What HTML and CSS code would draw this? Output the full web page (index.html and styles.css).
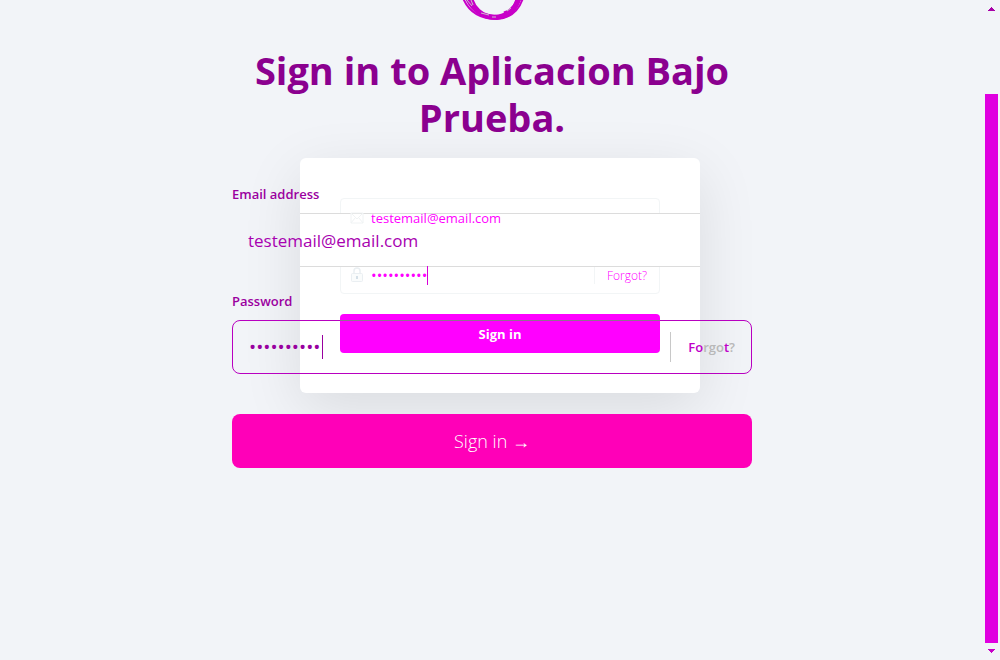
FILE: index.html
```html
<!DOCTYPE html>
<html lang="en">
<head>
<meta charset="utf-8">
<title>Sign in</title>
<link rel="stylesheet" href="styles.css">
</head>
<body>
<div class="page">
  <section class="back">
    <form class="card">
      <div class="band"></div>
      <div class="field small">
        <svg class="icon" viewBox="0 0 14 14"><path d="M1 3h12v10H1zM1 3l6 6 6-6M1 13l4-5M13 13L9 8" fill="none" stroke="#f0f3f4"/></svg>
        <input class="small-email" type="email" value="testemail@email.com" aria-label="Email">
      </div>
      <div class="field small">
        <svg class="icon lock" viewBox="0 0 14 16"><path d="M4 7V4a3 3 0 0 1 6 0v3" fill="none" stroke="#eaeff2" stroke-width="1.5"/><rect x="1.5" y="6.5" width="11" height="8" rx="1" fill="#fafcfc" stroke="#eaeff2"/><path d="M6 9h2v3H6z" fill="#d5e0e8"/></svg>
        <input class="small-pass" type="password" value="abcdefghij" aria-label="Account password">
        <span class="caret"></span>
        <a class="small-forgot" href="#">Forgot?</a>
      </div>
      <button class="small-submit" type="button">Sign in</button>
    </form>
  </section>
  <main class="front">
    <svg class="logo" viewBox="0 0 72 22"><g fill="none" stroke="#c800c8"><path d="M14-6C17 24 58 26 64-6" stroke-width="5"/><path d="M7-2C14 15 27 19 41 19C56 18 63 10 67-2" stroke-width="2"/><path d="M11-2C17 12 28 17 41 17C53 17 60 10 63-2" stroke-width="4"/><path d="M61-2C60 6 55 11 48 13" stroke-width="3"/></g><path d="M11 0l5 6M15 0l2 5M25 13l8 2M36 17h4M51 11l4-3" fill="none" stroke="#c9c3ca" stroke-width="1"/></svg>
    <h1 class="title">Sign in to Aplicacion Bajo Prueba.</h1>
    <form class="form">
      <label class="label" for="email">Email address</label>
      <div class="field large">
        <input id="email" class="email" type="email" value="testemail@email.com">
      </div>
      <label class="label second" for="password">Password</label>
      <div class="field large outlined">
        <span class="overlap"></span>
        <input id="password" class="pass" type="password" value="abcdefghij">
        <span class="caret tall"></span>
        <a class="forgot" href="#"><span class="hot">Fo</span>rgo<span class="hot">t</span>?</a>
      </div>
      <button class="submit" type="button">Sign in →</button>
    </form>
  </main>
  <aside class="scroll" aria-hidden="true">
    <svg class="arrow" viewBox="0 0 7 4"><path d="M3 0h1v1h1v1h1v1h1v1H0V3h1V2h1V1h1z" fill="#a800a8"/></svg>
    <div class="thumb"></div>
    <svg class="arrow" viewBox="0 0 7 4"><path d="M0 0h7v1H6v1H5v1H4v1H3V3H2V2H1V1H0z" fill="#c800c8"/></svg>
  </aside>
</div>
</body>
</html>
```
FILE: styles.css
```css
* { box-sizing: border-box; }
body {
  margin: 0;
  background: #f2f4f8;
  font-family: "Open Sans", "Noto Sans", sans-serif;
}
.page {
  display: grid;
  grid-template-columns: 1fr 16px;
  min-height: 100vh;
  overflow: hidden;
}
.back {
  grid-area: 1 / 1 / 2 / 3;
  padding-top: 158px;
}
.front {
  grid-area: 1 / 1 / 2 / 2;
  position: relative;
  width: 100%;
  max-width: 520px;
  margin: 0 auto;
}
.scroll {
  grid-area: 1 / 2 / 2 / 3;
  display: flex;
  flex-direction: column;
  align-items: center;
  padding: 7px 2px 7px 0;
}
.arrow { width: 7px; height: 4px; flex: none; }
.thumb {
  flex: 1;
  width: 13px;
  margin: 83px 0 6px;
  background: #e000e0;
}
input {
  border: 0;
  padding: 0;
  background: transparent;
  font-family: inherit;
  outline: 0;
  min-width: 0;
}
a { text-decoration: none; }
.card {
  position: relative;
  display: flex;
  flex-direction: column;
  gap: 20px;
  max-width: 400px;
  margin: 0 auto;
  padding: 40px;
  background: #fff;
  border-radius: 6px;
  box-shadow: 0 16px 60px rgba(0, 0, 0, 0.1);
}
.band {
  position: absolute;
  top: 55px;
  left: 0;
  right: 0;
  height: 54px;
  background: #fff;
  border: solid #dcdcdc;
  border-width: 1px 0;
}
.field { display: flex; align-items: center; }
.small {
  height: 38px;
  padding-left: 9px;
  border: 1px solid #f2f5f6;
  border-radius: 4px;
}
.icon { width: 14px; height: 14px; position: relative; }
.lock { height: 16px; }
.small-email, .small-pass {
  position: relative;
  margin-left: 7px;
  font-size: 13px;
  color: #f0f;
}
.small-email { flex: 1; padding-top: 2px; }
.small-pass { width: 56px; font-size: 15px; }
.caret {
  position: relative;
  width: 1px;
  height: 19px;
  background: #d800d8;
}
.small-forgot {
  position: relative;
  margin-left: auto;
  padding: 0 12px;
  border-left: 1px solid #f2f5f6;
  font-size: 12px;
  font-weight: 300;
  color: #f0f;
}
.small-submit {
  height: 39px;
  border: 0;
  border-radius: 4px;
  background: #f0f;
  color: #fff;
  font: 700 13px "Open Sans", sans-serif;
}
.logo {
  display: block;
  width: 72px;
  height: 22px;
  margin: 0 auto;
}
.title {
  margin: 25px 0 0;
  color: #8b008f;
  font-size: 38px;
  line-height: 47px;
  font-weight: 700;
  text-align: center;
}
.form { display: flex; flex-direction: column; padding-top: 43px; }
.label {
  height: 29px;
  line-height: 20px;
  color: #9b009f;
  font-size: 13px;
  font-weight: 600;
}
.large { height: 54px; padding: 0 16px; }
.second { margin-top: 24px; }
.email { flex: 1; font-size: 17px; color: #a800b0; }
.outlined {
  position: relative;
  border: 1px solid #b800c0;
  border-radius: 8px;
}
.overlap {
  position: absolute;
  top: -1px;
  left: 107px;
  width: 320px;
  height: 1px;
  background: #907090;
}
.pass { width: 73px; font-size: 19px; color: #98009f; }
.tall { height: 24px; background: #98009f; }
.forgot {
  margin-left: auto;
  padding-left: 17px;
  border-left: 1px solid #c8c8c8;
  line-height: 30px;
  font-size: 13px;
  font-weight: 600;
  color: #b8b8b8;
}
.hot { color: #c000c8; }
.submit {
  height: 54px;
  margin-top: 40px;
  border: 0;
  border-radius: 8px;
  background: #ff00b8;
  color: #fff;
  font: 300 18px "Open Sans", sans-serif;
}
```
